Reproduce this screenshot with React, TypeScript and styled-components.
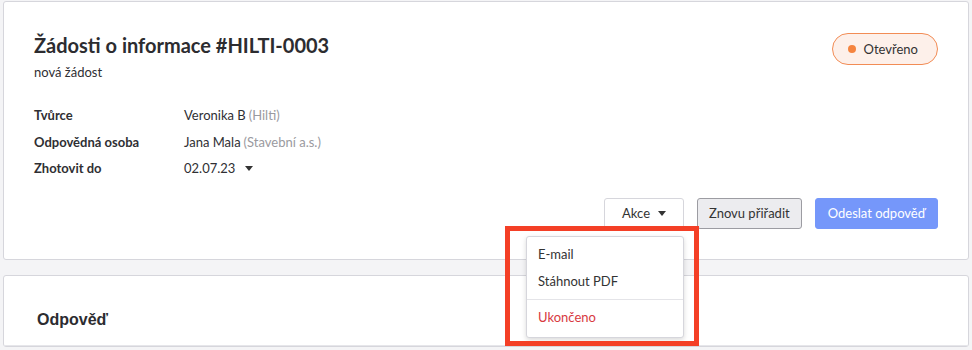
import React from 'react';
import styled, { createGlobalStyle } from 'styled-components';

const GlobalStyle = createGlobalStyle`
  html, body {
    margin: 0;
    padding: 0;
    background: #f4f4f6;
    font-family: 'Lato', 'Liberation Sans', sans-serif;
    color: #2f2f33;
  }
`;

const Page = styled.div`
  position: relative;
  padding: 1px 3px 0;
  display: flex;
  flex-direction: column;
  gap: 15px;
`;

const Card = styled.div`
  background: #fff;
  border: 1px solid #d6d6dc;
  border-radius: 3px;
`;

const DetailBody = styled.div`
  padding: 31px 30px 30px;
  display: flex;
  flex-direction: column;
`;

const Header = styled.div`
  display: flex;
  justify-content: space-between;
  align-items: flex-start;
`;

const Title = styled.h1`
  margin: 0;
  font-size: 20px;
  line-height: 24px;
  font-weight: 700;
  color: #2c2c30;
`;

const Subtitle = styled.div`
  margin-top: 6px;
  font-size: 13px;
  line-height: 18px;
`;

const Badge = styled.div`
  height: 32px;
  box-sizing: border-box;
  display: flex;
  align-items: center;
  gap: 8px;
  padding: 0 19px 0 15px;
  border: 1px solid #f28c55;
  border-radius: 16px;
  background: #fdf0ea;
  font-size: 13px;
  color: #333;
`;

const Dot = styled.span`
  width: 8px;
  height: 8px;
  border-radius: 50%;
  background: #f5843f;
`;

const Details = styled.div`
  margin-top: 21px;
  display: grid;
  grid-template-columns: 150px 1fr;
  grid-auto-rows: 26.5px;
  align-items: center;
  font-size: 13px;
`;

const Label = styled.div`
  font-weight: 700;
`;

const Value = styled.div`
  display: flex;
  align-items: center;
`;

const Muted = styled.span`
  color: #9a9aa0;
  margin-left: 3px;
`;

const Caret = styled.span<{ $gap?: number }>`
  display: inline-block;
  width: 0;
  height: 0;
  margin-left: ${(p) => p.$gap ?? 8}px;
  border-left: 4px solid transparent;
  border-right: 4px solid transparent;
  border-top: 5px solid #333;
`;

const Actions = styled.div`
  margin-top: 16px;
  display: flex;
  justify-content: flex-end;
  gap: 13px;
`;

const ButtonWrap = styled.div`
  position: relative;
`;

const Button = styled.button<{ $variant?: 'default' | 'muted' | 'primary' }>`
  height: 31px;
  padding: 0 ${(p) => (p.$variant === 'muted' ? 11 : p.$variant === 'primary' ? 12 : 17)}px;
  display: flex;
  align-items: center;
  font-family: 'Lato', 'Liberation Sans', sans-serif;
  font-size: 13px;
  border-radius: 3px;
  cursor: pointer;
  border: 1px solid
    ${(p) => (p.$variant === 'muted' ? '#9c9ca2' : p.$variant === 'primary' ? '#7597fa' : '#d6d6dc')};
  background: ${(p) => (p.$variant === 'muted' ? '#ececef' : p.$variant === 'primary' ? '#7597fa' : '#fff')};
  color: ${(p) => (p.$variant === 'primary' ? '#fff' : '#333')};
`;

const Menu = styled.div`
  position: absolute;
  top: 38px;
  right: 0;
  width: 158px;
  box-sizing: border-box;
  padding: 4px 0 6px;
  background: #fff;
  border: 1px solid #d6d6dc;
  border-radius: 3px;
  box-shadow: 0 2px 5px rgba(0, 0, 0, 0.15);
  z-index: 2;
`;

const MenuItem = styled.div<{ $danger?: boolean }>`
  padding: 0 11px;
  height: 27px;
  display: flex;
  align-items: center;
  font-size: 13px;
  color: ${(p) => (p.$danger ? '#d83a3f' : '#333')};
`;

const MenuDivider = styled.div`
  height: 1px;
  margin: 4px 0;
  background: #e4e4e8;
`;

const Highlight = styled.div`
  position: absolute;
  left: 505px;
  top: 226px;
  width: 194px;
  height: 120px;
  box-sizing: border-box;
  border: 5px solid #f43f26;
  z-index: 3;
  pointer-events: none;
`;

const ReplyHeader = styled.div`
  padding: 33px 33px 14px;
  border-bottom: 1px solid #e6e6ea;
  font-family: 'Liberation Sans', Arial, sans-serif;
  font-size: 16px;
  line-height: 22px;
  font-weight: 700;
  color: #2c2c30;
`;

const App: React.FC = () => {
  return (
    <>
      <GlobalStyle />
      <Page>
        <Card>
          <DetailBody>
            <Header>
              <div>
                <Title>Žádosti o informace #HILTI-0003</Title>
                <Subtitle>nová žádost</Subtitle>
              </div>
              <Badge>
                <Dot />
                Otevřeno
              </Badge>
            </Header>
            <Details>
              <Label>Tvůrce</Label>
              <Value>
                Veronika B<Muted>(Hilti)</Muted>
              </Value>
              <Label>Odpovědná osoba</Label>
              <Value>
                Jana Mala<Muted>(Stavební a.s.)</Muted>
              </Value>
              <Label>Zhotovit do</Label>
              <Value>
                02.07.23
                <Caret $gap={10} />
              </Value>
            </Details>
            <Actions>
              <ButtonWrap>
                <Button>
                  Akce
                  <Caret $gap={8} />
                </Button>
                <Menu>
                  <MenuItem>E-mail</MenuItem>
                  <MenuItem>Stáhnout PDF</MenuItem>
                  <MenuDivider />
                  <MenuItem $danger>Ukončeno</MenuItem>
                </Menu>
              </ButtonWrap>
              <Button $variant="muted">Znovu přiřadit</Button>
              <Button $variant="primary">Odeslat odpověď</Button>
            </Actions>
          </DetailBody>
        </Card>
        <Card>
          <ReplyHeader>Odpověď</ReplyHeader>
        </Card>
        <Highlight />
      </Page>
    </>
  );
};

export default App;
